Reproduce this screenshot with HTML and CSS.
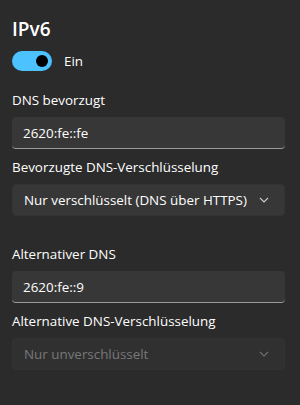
FILE: index.html
```html
<!DOCTYPE html>
<html lang="de">

<head>
  <meta charset="UTF-8">
  <meta name="viewport" content="width=device-width, initial-scale=1.0">
  <title>IPv6 DNS</title>
  <link rel="stylesheet" href="styles.css">
</head>

<body>
  <div class="panel">
    <h2>IPv6</h2>

    <div class="toggle-row">
      <span class="toggle"><span class="knob"></span></span>
      <span>Ein</span>
    </div>

    <div class="field first">
      <label>DNS bevorzugt</label>
      <div class="input">2620:fe::fe</div>
    </div>

    <div class="field">
      <label>Bevorzugte DNS-Verschlüsselung</label>
      <div class="select">
        <span>Nur verschlüsselt (DNS über HTTPS)</span>
        <svg class="chevron" width="10" height="6" viewBox="0 0 10 6">
          <path d="M1 1l4 4 4-4" fill="none" stroke="currentColor" stroke-width="1.1" />
        </svg>
      </div>
    </div>

    <div class="field spaced">
      <label>Alternativer DNS</label>
      <div class="input">2620:fe::9</div>
    </div>

    <div class="field">
      <label>Alternative DNS-Verschlüsselung</label>
      <div class="select disabled">
        <span>Nur unverschlüsselt</span>
        <svg class="chevron" width="10" height="6" viewBox="0 0 10 6">
          <path d="M1 1l4 4 4-4" fill="none" stroke="currentColor" stroke-width="1.1" />
        </svg>
      </div>
    </div>
  </div>
</body>

</html>
```

FILE: styles.css
```css
* {
  box-sizing: border-box;
  margin: 0;
  padding: 0;
}

body {
  background: #2b2b2b;
  color: #ffffff;
  font-family: "Open Sans", "Noto Sans", sans-serif;
  font-size: 13.4px;
}

.panel {
  padding: 16px 15px 0 12px;
}

h2 {
  font-size: 19px;
  font-weight: 600;
  line-height: 26px;
}

.toggle-row {
  display: flex;
  align-items: center;
  gap: 12px;
  margin-top: 9px;
}

.toggle {
  width: 40px;
  height: 20px;
  border-radius: 10px;
  background: #4cc2ff;
  display: flex;
  align-items: center;
  justify-content: flex-end;
  padding-right: 4px;
}

.knob {
  width: 12px;
  height: 12px;
  border-radius: 50%;
  background: #000;
}

.field {
  margin-top: 8px;
}

.field.first {
  margin-top: 19px;
}

.field.spaced {
  margin-top: 28px;
}

.field label {
  display: block;
  line-height: 20px;
  margin-bottom: 7px;
}

.input,
.select {
  height: 32px;
  border-radius: 4px;
  background: #373737;
  display: flex;
  align-items: center;
  padding: 0 11px;
}

.input {
  border-bottom: 1px solid #9a9a9a;
}

.select {
  justify-content: space-between;
  padding-right: 15px;
  border: 1px solid #333333;
}

.chevron {
  color: #cfcfcf;
}

.select.disabled {
  background: #303030;
  color: #787878;
}

.select.disabled .chevron {
  color: #6f6f6f;
}
```
